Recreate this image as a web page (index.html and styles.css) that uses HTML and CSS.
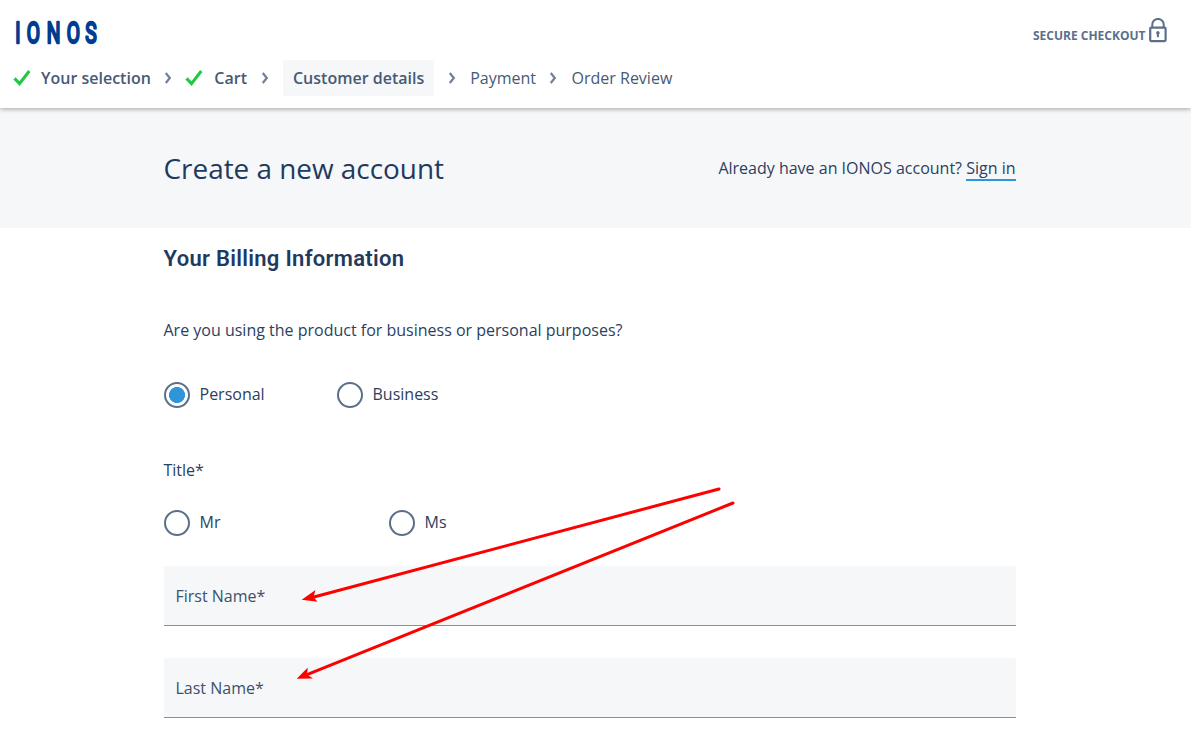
FILE: index.html
```html
<!DOCTYPE html>
<html lang="en">
<head>
<meta charset="utf-8">
<title>IONOS Checkout</title>
<link rel="stylesheet" href="styles.css">
</head>
<body>
<header class="header">
  <div class="topbar">
    <svg class="logo" width="90" height="30" viewBox="0 0 90 30" role="img" aria-label="IONOS">
      <text class="logo-text" transform="scale(.64 1)" y="25.6" x="7.8 31.700 63.300 94.200 121.900">IONOS</text>
    </svg>
    <div class="secure">
      <span class="secure-text">SECURE CHECKOUT</span>
      <svg class="lock" width="18" height="25" viewBox="0 0 18 25">
        <path d="M3.3 9.5V6.6a5.7 5.7 0 0 1 11.4 0v2.9" fill="none" stroke="#5b6f8b" stroke-width="2"/>
        <rect x="1.2" y="9.7" width="15.4" height="13.4" rx="1" fill="none" stroke="#5b6f8b" stroke-width="2.2"/>
        <path d="M8.9 13a1.9 1.9 0 0 1 1 3.4v2.8h-2v-2.8a1.9 1.9 0 0 1 1-3.4z" fill="#5b6f8b"/>
      </svg>
    </div>
  </div>
  <nav class="steps">
    <svg class="check" width="18" height="18" viewBox="0 0 18 18"><path d="M1.5 9.4l5 5.2L16.3 2"/></svg>
    <span class="step done first">Your selection</span>
    <svg class="chevron" width="8" height="12" viewBox="0 0 8 12"><path d="M1.800 1l4 5-4 5"/></svg>
    <svg class="check second" width="18" height="18" viewBox="0 0 18 18"><path d="M1.5 9.4l5 5.2L16.3 2"/></svg>
    <span class="step done cart">Cart</span>
    <svg class="chevron" width="8" height="12" viewBox="0 0 8 12"><path d="M1.800 1l4 5-4 5"/></svg>
    <span class="step current">Customer details</span>
    <svg class="chevron" width="8" height="12" viewBox="0 0 8 12"><path d="M1.800 1l4 5-4 5"/></svg>
    <span class="step payment">Payment</span>
    <svg class="chevron" width="8" height="12" viewBox="0 0 8 12"><path d="M1.800 1l4 5-4 5"/></svg>
    <span class="step">Order Review</span>
  </nav>
</header>
<section class="banner">
  <div class="content banner-row">
    <h1 class="title">Create a new account</h1>
    <p class="signin">Already have an IONOS account? <a class="link" href="#">Sign in</a></p>
  </div>
</section>
<main class="content">
  <h2 class="subtitle">Your Billing Information</h2>
  <p class="question">Are you using the product for business or personal purposes?</p>
  <div class="options usage">
    <label class="option"><span class="radio checked"></span><span>Personal</span></label>
    <label class="option"><span class="radio"></span><span>Business</span></label>
  </div>
  <p class="field-title">Title*</p>
  <div class="options salutation">
    <label class="option"><span class="radio"></span><span>Mr</span></label>
    <label class="option"><span class="radio"></span><span>Ms</span></label>
  </div>
  <div class="fields">
    <div class="field">First Name*</div>
    <div class="field">Last Name*</div>
  </div>
</main>
<svg class="arrows" width="1191" height="733" viewBox="0 0 1191 733">
  <g fill="none" stroke="#f00" stroke-width="3" stroke-linecap="round">
    <path d="M719 489L312 597.5"/>
    <path d="M733 503L307 674.6"/>
  </g>
  <g fill="#f00">
    <path d="M301.700 599.800L315.500 590l-2 7 4 4.800z"/>
    <path d="M296.700 678.700L307.800 667.500l-.8 7 6 4z"/>
  </g>
</svg>
</body>
</html>
```
FILE: styles.css
```css
* { box-sizing: border-box; }
body {
  margin: 0;
  height: 733px;
  overflow: hidden;
  position: relative;
  background: #fff;
  color: #2b3f5f;
  font: 16px/24px "Open Sans", sans-serif;
}
h1, h2, p { margin: 0; }
svg { display: block; flex: none; }
.header {
  position: relative;
  height: 108px;
  background: #fff;
  box-shadow: 0 1px 5px rgba(0, 0, 0, .35);
}
.topbar {
  display: flex;
  justify-content: space-between;
  height: 60px;
  padding: 18px 24.500px 0 13px;
}
.logo { overflow: visible; margin-top: -1px; }
.logo-text {
  font: 400 30px Roboto, sans-serif;
  text-anchor: middle;
  fill: #003d8f;
  stroke: #003d8f;
  stroke-width: 2.600px;
  stroke-linejoin: round;
}
.secure { display: flex; gap: 3px; height: 26px; }
.secure-text {
  padding-top: 6px;
  color: #5b6f8b;
  font-size: 12px;
  font-weight: 700;
}
.steps {
  display: flex;
  align-items: center;
  height: 36px;
  padding-left: 13px;
  color: #465a75;
}
.check { fill: none; stroke: #1fc845; stroke-width: 3; }
.check.second { margin-left: 13px; }
.chevron { fill: none; stroke: #718096; stroke-width: 2.200; }
.step { white-space: nowrap; }
.done, .current { font-weight: 600; }
.first { margin: 0 13px 0 10px; }
.cart { margin: 0 14px 0 11.500px; }
.current {
  margin: 0 13.500px 0 14px;
  padding: 6px 10px;
  border-radius: 2px;
  background: #f5f7f9;
}
.payment { margin: 0 13px 0 14.500px; }
.payment + .chevron { margin-right: 14.500px; }
.content { width: 852px; margin-left: 163.500px; }
.banner { height: 120px; background: #f5f7f9; }
.banner-row { display: flex; justify-content: space-between; }
.title {
  padding-top: 40px;
  color: #1f3a5f;
  font-size: 27.900px;
  font-weight: 400;
  line-height: 40px;
}
.signin { padding-top: 48px; }
.link {
  display: inline-block;
  color: inherit;
  line-height: 22px;
  border-bottom: 2px solid #2e95d9;
  text-decoration: none;
}
.subtitle {
  padding-top: 16px;
  color: #1f3a5f;
  font: 600 22px/30px Roboto, sans-serif;
  letter-spacing: .3px;
}
.question { margin-top: 44px; }
.options { display: grid; }
.usage { grid-template-columns: 173px 173px; margin-top: 40px; }
.salutation { grid-template-columns: 225px 225px; margin-top: 28px; }
.option { display: flex; gap: 10px; height: 26px; }
.radio {
  width: 26px;
  height: 26px;
  border: 2px solid #5b6f8b;
  border-radius: 50%;
}
.checked { background: radial-gradient(circle, #2f95d9 7.700px, #fff 8.300px); }
.field-title { margin-top: 50px; }
.fields { display: grid; gap: 32px; margin-top: 30px; }
.field {
  height: 60px;
  padding: 18px 12px;
  border-bottom: 1px solid #8390a8;
  border-radius: 2px 2px 0 0;
  background: #f5f7f9;
  color: #3d506c;
}
.arrows { position: absolute; top: 0; left: 0; pointer-events: none; }
```
